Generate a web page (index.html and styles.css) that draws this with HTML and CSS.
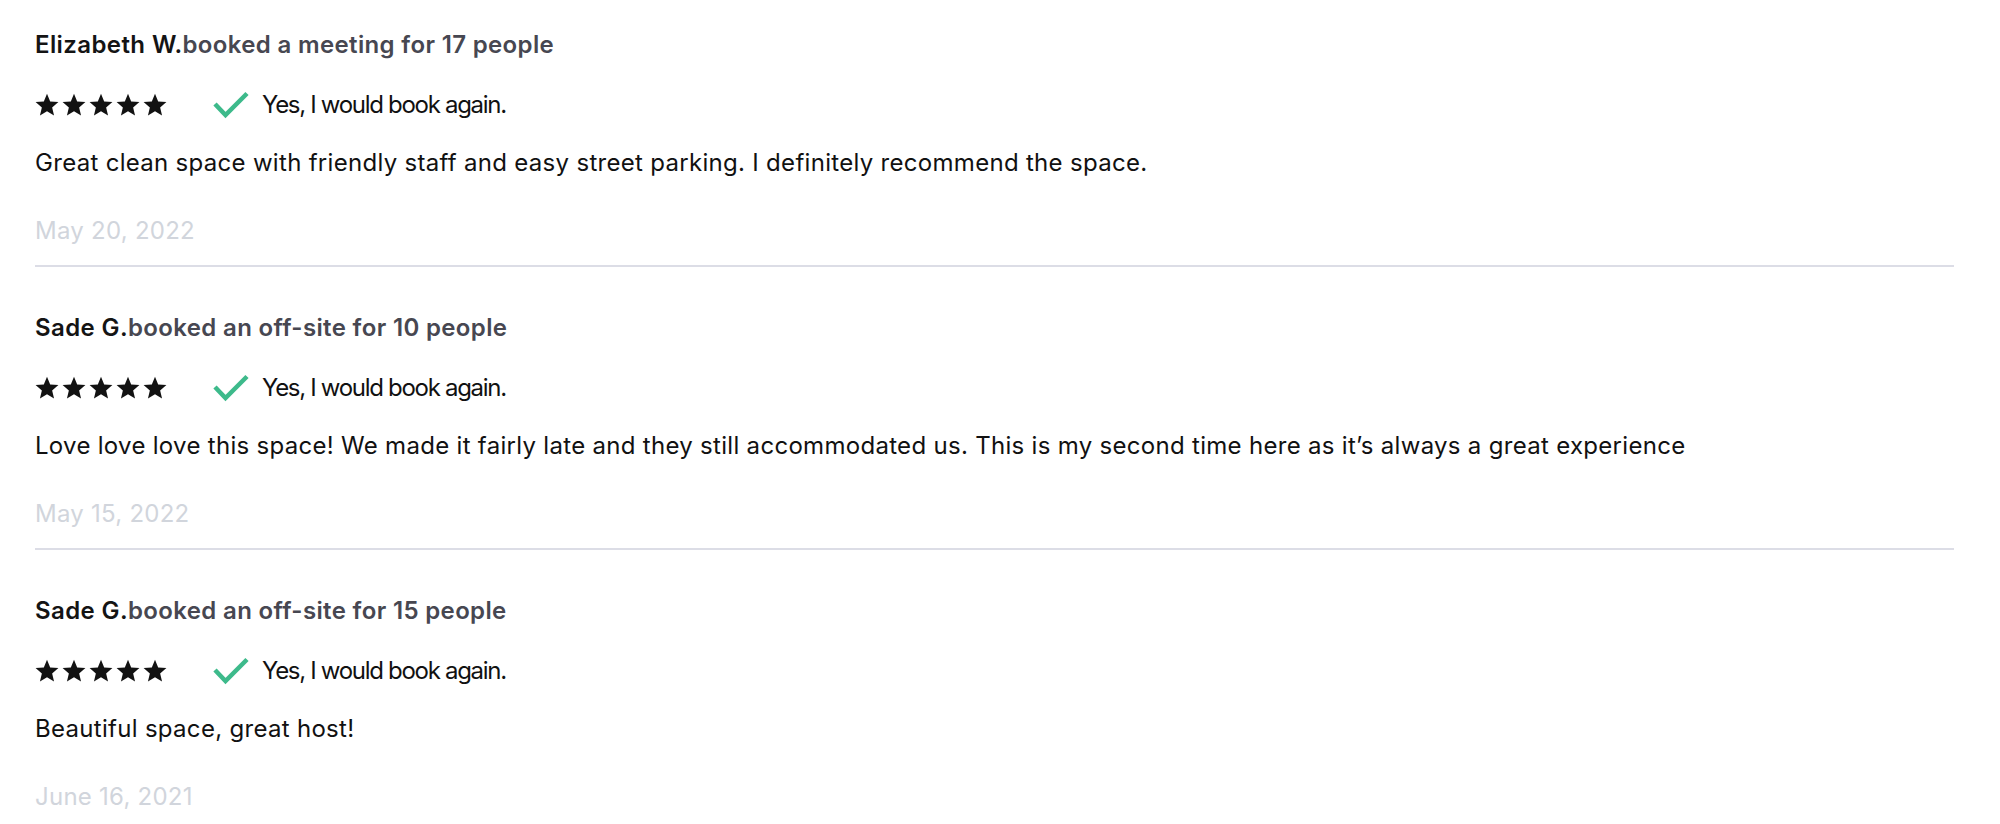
FILE: index.html
```html
<!DOCTYPE html>
<html lang="en">
<head>
<meta charset="utf-8">
<title>Reviews</title>
<link rel="stylesheet" href="styles.css">
</head>
<body>
<div class="reviews">
  <div class="review">
    <div class="review-title"><span class="name">Elizabeth W.</span><span class="booked">booked a meeting for 17 people</span></div>
    <div class="review-meta">
      <div class="stars">
        <svg class="star" viewBox="0 0 24 24"><path d="M12 0.8L15.18 8.43 23.41 9.09 17.14 14.47 19.05 22.51 12 18.2 4.95 22.51 6.86 14.47 0.59 9.09 8.82 8.43z"/></svg>
        <svg class="star" viewBox="0 0 24 24"><path d="M12 0.8L15.18 8.43 23.41 9.09 17.14 14.47 19.05 22.51 12 18.2 4.95 22.51 6.86 14.47 0.59 9.09 8.82 8.43z"/></svg>
        <svg class="star" viewBox="0 0 24 24"><path d="M12 0.8L15.18 8.43 23.41 9.09 17.14 14.47 19.05 22.51 12 18.2 4.95 22.51 6.86 14.47 0.59 9.09 8.82 8.43z"/></svg>
        <svg class="star" viewBox="0 0 24 24"><path d="M12 0.8L15.18 8.43 23.41 9.09 17.14 14.47 19.05 22.51 12 18.2 4.95 22.51 6.86 14.47 0.59 9.09 8.82 8.43z"/></svg>
        <svg class="star" viewBox="0 0 24 24"><path d="M12 0.8L15.18 8.43 23.41 9.09 17.14 14.47 19.05 22.51 12 18.2 4.95 22.51 6.86 14.47 0.59 9.09 8.82 8.43z"/></svg>
      </div>
      <div class="again">
        <svg class="check" viewBox="0 0 36 28"><polyline points="2,13 12.5,24 34,2.5"/></svg>
        <span class="again-text">Yes, I would book again.</span>
      </div>
    </div>
    <p class="review-body">Great clean space with friendly staff and easy street parking. I definitely recommend the space.</p>
    <div class="review-date">May 20, 2022</div>
  </div>

  <div class="review">
    <div class="review-title"><span class="name">Sade G.</span><span class="booked">booked an off-site for 10 people</span></div>
    <div class="review-meta">
      <div class="stars">
        <svg class="star" viewBox="0 0 24 24"><path d="M12 0.8L15.18 8.43 23.41 9.09 17.14 14.47 19.05 22.51 12 18.2 4.95 22.51 6.86 14.47 0.59 9.09 8.82 8.43z"/></svg>
        <svg class="star" viewBox="0 0 24 24"><path d="M12 0.8L15.18 8.43 23.41 9.09 17.14 14.47 19.05 22.51 12 18.2 4.95 22.51 6.86 14.47 0.59 9.09 8.82 8.43z"/></svg>
        <svg class="star" viewBox="0 0 24 24"><path d="M12 0.8L15.18 8.43 23.41 9.09 17.14 14.47 19.05 22.51 12 18.2 4.95 22.51 6.86 14.47 0.59 9.09 8.82 8.43z"/></svg>
        <svg class="star" viewBox="0 0 24 24"><path d="M12 0.8L15.18 8.43 23.41 9.09 17.14 14.47 19.05 22.51 12 18.2 4.95 22.51 6.86 14.47 0.59 9.09 8.82 8.43z"/></svg>
        <svg class="star" viewBox="0 0 24 24"><path d="M12 0.8L15.18 8.43 23.41 9.09 17.14 14.47 19.05 22.51 12 18.2 4.95 22.51 6.86 14.47 0.59 9.09 8.82 8.43z"/></svg>
      </div>
      <div class="again">
        <svg class="check" viewBox="0 0 36 28"><polyline points="2,13 12.5,24 34,2.5"/></svg>
        <span class="again-text">Yes, I would book again.</span>
      </div>
    </div>
    <p class="review-body">Love love love this space! We made it fairly late and they still accommodated us. This is my second time here as it’s always a great experience</p>
    <div class="review-date">May 15, 2022</div>
  </div>

  <div class="review">
    <div class="review-title"><span class="name">Sade G.</span><span class="booked">booked an off-site for 15 people</span></div>
    <div class="review-meta">
      <div class="stars">
        <svg class="star" viewBox="0 0 24 24"><path d="M12 0.8L15.18 8.43 23.41 9.09 17.14 14.47 19.05 22.51 12 18.2 4.95 22.51 6.86 14.47 0.59 9.09 8.82 8.43z"/></svg>
        <svg class="star" viewBox="0 0 24 24"><path d="M12 0.8L15.18 8.43 23.41 9.09 17.14 14.47 19.05 22.51 12 18.2 4.95 22.51 6.86 14.47 0.59 9.09 8.82 8.43z"/></svg>
        <svg class="star" viewBox="0 0 24 24"><path d="M12 0.8L15.18 8.43 23.41 9.09 17.14 14.47 19.05 22.51 12 18.2 4.95 22.51 6.86 14.47 0.59 9.09 8.82 8.43z"/></svg>
        <svg class="star" viewBox="0 0 24 24"><path d="M12 0.8L15.18 8.43 23.41 9.09 17.14 14.47 19.05 22.51 12 18.2 4.95 22.51 6.86 14.47 0.59 9.09 8.82 8.43z"/></svg>
        <svg class="star" viewBox="0 0 24 24"><path d="M12 0.8L15.18 8.43 23.41 9.09 17.14 14.47 19.05 22.51 12 18.2 4.95 22.51 6.86 14.47 0.59 9.09 8.82 8.43z"/></svg>
      </div>
      <div class="again">
        <svg class="check" viewBox="0 0 36 28"><polyline points="2,13 12.5,24 34,2.5"/></svg>
        <span class="again-text">Yes, I would book again.</span>
      </div>
    </div>
    <p class="review-body">Beautiful space, great host!</p>
    <div class="review-date">June 16, 2021</div>
  </div>
</div>
</body>
</html>
```

FILE: styles.css
```css
* {
  box-sizing: border-box;
}

html, body {
  margin: 0;
  padding: 0;
  background: #ffffff;
}

body {
  font-family: Inter, "Noto Sans", "DejaVu Sans", sans-serif;
  font-size: 24px;
  line-height: 32px;
  color: #111111;
}

.reviews {
  width: 1954px;
  padding: 29px 0 0 35px;
}

.review {
  padding-bottom: 18px;
  border-bottom: 2px solid #dcdde6;
  margin-bottom: 45px;
}

.review:last-child {
  border-bottom: none;
  padding-bottom: 0;
  margin-bottom: 0;
}

.review-title {
  height: 32px;
  white-space: nowrap;
}

.name {
  font-weight: 600;
  color: #141414;
  letter-spacing: 0.4px;
}

.booked {
  font-weight: 600;
  color: #474751;
  letter-spacing: 0.35px;
}

.review-meta {
  display: flex;
  align-items: center;
  height: 32px;
  margin-top: 28px;
}

.stars {
  display: flex;
  gap: 3px;
  width: 178px;
}

.star {
  width: 24px;
  height: 24px;
  fill: #121212;
}

.again {
  display: flex;
  align-items: center;
}

.check {
  width: 36px;
  height: 28px;
  fill: none;
  stroke: #3dba8b;
  stroke-width: 4.5;
  margin-right: 13px;
}

.again-text {
  font-size: 24px;
  color: #111111;
  letter-spacing: -1.3px;
}

.review-body {
  margin: 26px 0 0;
  letter-spacing: 0.3px;
}

.review-date {
  margin-top: 36px;
  color: #d1d5dc;
  letter-spacing: 0.25px;
}
```
